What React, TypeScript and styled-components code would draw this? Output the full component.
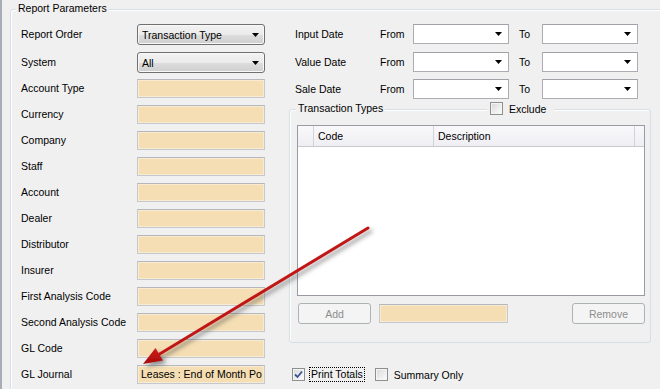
import { FC } from 'react';
import styled, { createGlobalStyle } from 'styled-components';

const GlobalStyle = createGlobalStyle`
  html, body {
    margin: 0;
    padding: 0;
    background: #f0f0f0;
  }
  body {
    font-family: 'Liberation Sans', Arial, sans-serif;
    font-size: 10.5px;
    color: #000;
  }
`;

const lookupFields = [
  'Account Type',
  'Currency',
  'Company',
  'Staff',
  'Account',
  'Dealer',
  'Distributor',
  'Insurer',
  'First Analysis Code',
  'Second Analysis Code',
  'GL Code'
];

const dateRows = [
  { label: 'Input Date', height: 28 },
  { label: 'Value Date', height: 27 },
  { label: 'Sale Date', height: 20 }
];

const Caret: FC = () => (
  <CaretIcon width="7" height="4" viewBox="0 0 7 4">
    <path d="M0 0 H7 L3.5 4 Z" fill="#000" />
  </CaretIcon>
);

const CheckMark: FC = () => (
  <svg width="9" height="9" viewBox="0 0 9 9">
    <path
      d="M1 4.5 L3.5 7 L8 1.5"
      fill="none"
      stroke="#3b5497"
      strokeWidth="1.8"
    />
  </svg>
);

const App: FC = () => {
  return (
    <Screen>
      <GlobalStyle />
      <Frame>
        <Legend $left={5} $top={-8}>
          Report Parameters
        </Legend>
        <Columns>
          <LeftColumn>
            <FieldRow $height={28}>
              <FieldLabel $lh={21}>Report Order</FieldLabel>
              <Combo>
                Transaction Type
                <Caret />
              </Combo>
            </FieldRow>
            <FieldRow $height={27}>
              <FieldLabel $lh={21}>System</FieldLabel>
              <Combo>
                All
                <Caret />
              </Combo>
            </FieldRow>
            {lookupFields.map((name) => (
              <FieldRow $height={26} key={name}>
                <FieldLabel $lh={19}>{name}</FieldLabel>
                <TextBox />
              </FieldRow>
            ))}
            <FieldRow $height={26}>
              <FieldLabel $lh={19}>GL Journal</FieldLabel>
              <TextBox>Leases : End of Month Po</TextBox>
            </FieldRow>
          </LeftColumn>

          <RightColumn>
            {dateRows.map((row) => (
              <DateRow $height={row.height} key={row.label}>
                <DateLabel $width={85}>{row.label}</DateLabel>
                <DateLabel $width={33}>From</DateLabel>
                <DateBox>
                  <Caret />
                </DateBox>
                <DateLabel $width={23} $gap={10}>
                  To
                </DateLabel>
                <DateBox>
                  <Caret />
                </DateBox>
              </DateRow>
            ))}

            <TypesGroup>
              <Legend $left={6} $top={-8}>
                Transaction Types
              </Legend>
              <ExcludeLegend>
                <CheckBox />
                <span>Exclude</span>
              </ExcludeLegend>
              <Grid>
                <GridHeader>
                  <HeaderCell $width={16} />
                  <HeaderCell $width={120}>Code</HeaderCell>
                  <HeaderCell $width={201}>Description</HeaderCell>
                  <HeaderCell $width={9} $last />
                </GridHeader>
              </Grid>
              <ButtonRow>
                <Button disabled>Add</Button>
                <TextBox $width={129} />
                <Spacer />
                <Button disabled>Remove</Button>
              </ButtonRow>
            </TypesGroup>

            <CheckRow>
              <CheckBox>
                <CheckMark />
              </CheckBox>
              <FocusLabel>Print Totals</FocusLabel>
              <CheckBox $gap={10} />
              <CheckText>Summary Only</CheckText>
            </CheckRow>
          </RightColumn>
        </Columns>
      </Frame>

      <Overlay width="660" height="389" viewBox="0 0 660 389">
        <defs>
          <filter id="arrowShadow" x="-20%" y="-20%" width="140%" height="140%">
            <feDropShadow
              dx="3"
              dy="3"
              stdDeviation="2"
              floodColor="#404040"
              floodOpacity="0.55"
            />
          </filter>
          <linearGradient id="arrowRed" x1="0" y1="0" x2="0" y2="1">
            <stop offset="0" stopColor="#d01c1c" />
            <stop offset="1" stopColor="#a80c0c" />
          </linearGradient>
        </defs>
        <g filter="url(#arrowShadow)">
          <line
            x1="368"
            y1="228"
            x2="158"
            y2="355"
            stroke="#c01515"
            strokeWidth="3"
            strokeLinecap="round"
          />
          <polygon
            points="143,364 163,360.5 155.5,348"
            fill="url(#arrowRed)"
          />
        </g>
      </Overlay>
    </Screen>
  );
};

const Screen = styled.div`
  position: relative;
  width: 660px;
  height: 389px;
  overflow: hidden;
  box-sizing: border-box;
  background: #f0f0f0;
  border-left: 2px solid #a7adb4;
`;

const Frame = styled.div`
  position: relative;
  box-sizing: border-box;
  width: 720px;
  height: 420px;
  margin: 9px 0 0 8px;
  padding: 14px 0 0 10px;
  border: 1px solid #d5dfe5;
  border-radius: 3px;
  box-shadow: inset 1px 1px 0 #fff;
`;

const Legend = styled.span<{ $left: number; $top: number }>`
  position: absolute;
  left: ${(p) => p.$left}px;
  top: ${(p) => p.$top}px;
  padding: 0 2px;
  line-height: 13px;
  background: #f0f0f0;
`;

const Columns = styled.div`
  display: flex;
  align-items: flex-start;
`;

const LeftColumn = styled.div`
  display: flex;
  flex-direction: column;
  width: 244px;
`;

const FieldRow = styled.div<{ $height: number }>`
  display: flex;
  align-items: flex-start;
  height: ${(p) => p.$height}px;
`;

const FieldLabel = styled.div<{ $lh: number }>`
  width: 116px;
  line-height: ${(p) => p.$lh}px;
  white-space: nowrap;
`;

const Combo = styled.div`
  display: flex;
  align-items: center;
  justify-content: space-between;
  box-sizing: border-box;
  width: 128px;
  height: 21px;
  padding: 1px 5px 0 4px;
  border: 1px solid #707070;
  border-radius: 3px;
  background: linear-gradient(#f2f2f2, #ebebeb 50%, #dddddd 51%, #cfcfcf);
  box-shadow: inset 0 0 0 1px #f8f8f8;
`;

const CaretIcon = styled.svg`
  display: block;
  flex: none;
`;

const TextBox = styled.div<{ $width?: number }>`
  box-sizing: border-box;
  width: ${(p) => p.$width ?? 128}px;
  height: 19px;
  padding: 0 0 0 3px;
  line-height: 17px;
  white-space: nowrap;
  overflow: hidden;
  background: #f5deb3;
  border: 1px solid #c5c8cc;
  border-top-color: #b4b7bb;
  box-shadow: inset 0 0 0 1px #f8ebd2;
`;

const RightColumn = styled.div`
  display: flex;
  flex-direction: column;
  width: 362px;
  margin-left: 24px;
`;

const DateRow = styled.div<{ $height: number }>`
  display: flex;
  align-items: flex-start;
  height: ${(p) => p.$height}px;
  padding-left: 6px;
`;

const DateLabel = styled.div<{ $width: number; $gap?: number }>`
  width: ${(p) => p.$width}px;
  margin-left: ${(p) => p.$gap ?? 0}px;
  line-height: 20px;
`;

const DateBox = styled.div`
  display: flex;
  align-items: center;
  justify-content: flex-end;
  box-sizing: border-box;
  width: 96px;
  height: 20px;
  padding-right: 6px;
  background: #fff;
  border: 1px solid #abadb3;
  border-top-color: #a0a2a8;
`;

const TypesGroup = styled.div`
  position: relative;
  box-sizing: border-box;
  height: 234px;
  margin-top: 10px;
  padding: 15px 0 0 7px;
  border: 1px solid #d5dfe5;
  border-radius: 3px;
  box-shadow: inset 1px 1px 0 #fff;
`;

const ExcludeLegend = styled.div`
  position: absolute;
  left: 197px;
  top: -8px;
  display: flex;
  align-items: center;
  gap: 6px;
  height: 13px;
  padding: 0 8px 0 3px;
  background: #f0f0f0;
`;

const Grid = styled.div`
  box-sizing: border-box;
  width: 348px;
  height: 171px;
  background: #fff;
  border: 1px solid #9a9aa6;
`;

const GridHeader = styled.div`
  display: flex;
  height: 20px;
  border-bottom: 1px solid #c9c9d1;
  background: linear-gradient(#f9f9fb, #efeff3);
`;

const HeaderCell = styled.div<{ $width: number; $last?: boolean }>`
  box-sizing: border-box;
  width: ${(p) => p.$width}px;
  padding-left: 4px;
  line-height: 20px;
  border-right: ${(p) => (p.$last ? 'none' : '1px solid #d3d3da')};
`;

const ButtonRow = styled.div`
  display: flex;
  align-items: center;
  gap: 8px;
  width: 347px;
  margin: 7px 0 0 1px;
`;

const Spacer = styled.div`
  flex: 1;
`;

const Button = styled.button`
  box-sizing: border-box;
  width: 73px;
  height: 21px;
  padding: 0;
  font: inherit;
  color: #8d8d8d;
  background: #f4f4f4;
  border: 1px solid #adb2b5;
  border-radius: 3px;
`;

const CheckRow = styled.div`
  display: flex;
  align-items: center;
  height: 17px;
  margin: 23px 0 0 3px;
`;

const CheckBox = styled.div<{ $gap?: number }>`
  display: flex;
  align-items: center;
  justify-content: center;
  box-sizing: border-box;
  flex: none;
  width: 13px;
  height: 13px;
  margin-left: ${(p) => p.$gap ?? 0}px;
  border: 1px solid #8e8f8f;
  background: linear-gradient(135deg, #d8d8d8, #f6f6f6 80%);
  box-shadow: inset 0 0 0 1px #f4f4f4;
`;

const FocusLabel = styled.span`
  margin-left: 4px;
  padding: 0 1px;
  line-height: 13px;
  border: 1px dotted #000;
`;

const CheckText = styled.span`
  margin-left: 6px;
`;

const Overlay = styled.svg`
  position: absolute;
  left: -2px;
  top: 0;
  pointer-events: none;
`;

export default App;
